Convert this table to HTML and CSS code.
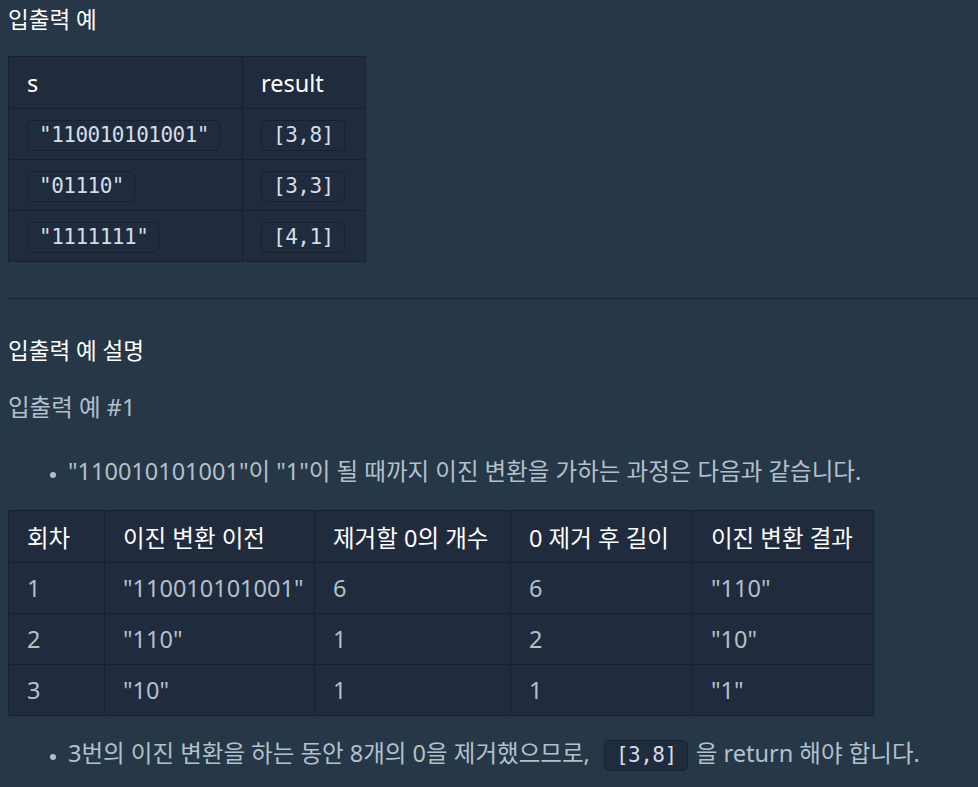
FILE: index.html
```html
<!DOCTYPE html>
<html lang="ko">
<head>
<meta charset="utf-8">
<link rel="stylesheet" href="styles.css">
</head>
<body>
<div class="doc">
  <h5 class="h h-first">입출력 예</h5>
  <table class="tbl tbl-io">
    <thead>
      <tr><th class="c-s">s</th><th class="c-r">result</th></tr>
    </thead>
    <tbody>
      <tr><td><code>"110010101001"</code></td><td><code>[3,8]</code></td></tr>
      <tr><td><code>"01110"</code></td><td><code>[3,3]</code></td></tr>
      <tr><td><code>"1111111"</code></td><td><code>[4,1]</code></td></tr>
    </tbody>
  </table>
  <hr class="rule">
  <h5 class="h h-second">입출력 예 설명</h5>
  <p class="p">입출력 예 #1</p>
  <ul class="list list-top">
    <li>"110010101001"이 "1"이 될 때까지 이진 변환을 가하는 과정은 다음과 같습니다.</li>
  </ul>
  <table class="tbl tbl-steps">
    <thead>
      <tr><th class="w1">회차</th><th class="w2">이진 변환 이전</th><th class="w3">제거할 0의 개수</th><th class="w4">0 제거 후 길이</th><th class="w5">이진 변환 결과</th></tr>
    </thead>
    <tbody>
      <tr><td>1</td><td>"110010101001"</td><td>6</td><td>6</td><td>"110"</td></tr>
      <tr><td>2</td><td>"110"</td><td>1</td><td>2</td><td>"10"</td></tr>
      <tr><td>3</td><td>"10"</td><td>1</td><td>1</td><td>"1"</td></tr>
    </tbody>
  </table>
  <ul class="list list-bottom">
    <li>3번의 이진 변환을 하는 동안 8개의 0을 제거했으므로, <code>[3,8]</code> 을 return 해야 합니다.</li>
  </ul>
</div>
</body>
</html>
```
FILE: styles.css
```css
html, body {
  margin: 0;
  padding: 0;
  background: #263747;
}
body {
  width: 978px;
  height: 787px;
  overflow: hidden;
  font-family: "Noto Sans", "Noto Sans CJK KR", sans-serif;
  color: #b2c0cc;
}
.doc {
  padding-left: 8px;
}
.h {
  margin: 0;
  font-size: 22.5px;
  line-height: 32px;
  font-weight: normal;
  color: #ffffff;
}
.h-first {
  padding-top: 4px;
  margin-bottom: 20px;
}
.tbl {
  border-collapse: collapse;
  background: #202b3d;
  font-size: 23.5px;
}
.tbl th, .tbl td {
  border: 1px solid #172131;
  padding: 0 18px;
  height: 50px;
  text-align: left;
  white-space: nowrap;
}
.tbl th {
  color: #ffffff;
  font-weight: normal;
  height: 51px;
}
.tbl td {
  color: #b2c0cc;
}
.tbl-steps {
  table-layout: fixed;
  width: 866px;
}
.tbl-steps td {
  overflow: visible;
}
.c-s { width: 197px; }
.c-r { width: 86px; }
.w1 { width: 59px; }
.w2 { width: 173px; }
.w3 { width: 159px; }
.w4 { width: 145px; }
.w5 { width: 144px; }
code {
  font-family: "DejaVu Sans Mono", monospace;
  font-size: 21px;
  letter-spacing: -0.5px;
  line-height: 25px;
  display: inline-block;
  padding: 2px 10px 2px 11px;
  border: 1px solid #172131;
  border-radius: 5px;
  background: #202b3d;
  color: #d4dde6;
  vertical-align: middle;
}
.rule {
  margin: 36px 0 0 0;
  border: 0;
  border-top: 1px solid #172131;
  height: 0;
}
.h-second {
  margin-top: 36px;
}
.p {
  margin: 24px 0 0 0;
  font-size: 23.5px;
  line-height: 32px;
}
.list {
  margin: 0;
  padding-left: 60px;
  font-size: 23.5px;
  line-height: 32px;
}
.list li::marker {
  font-size: 16px;
}
.list-top {
  margin-top: 32px;
  margin-bottom: 23px;
}
.list-bottom {
  margin-top: 21px;
}
.list-bottom code {
  vertical-align: baseline;
  margin: 0 2px 0 8px;
}
```
